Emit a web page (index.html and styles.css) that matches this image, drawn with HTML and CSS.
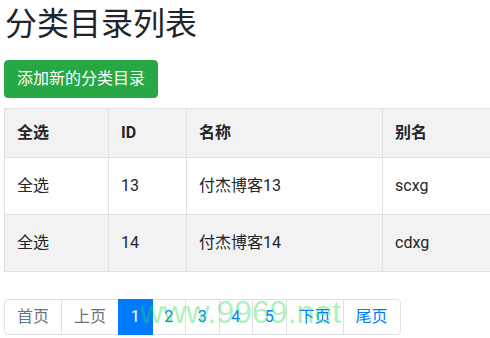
FILE: index.html
```html
<!DOCTYPE html>
<html lang="zh-CN">
<head>
    <meta charset="UTF-8">
    <meta name="viewport" content="width=device-width, initial-scale=1.0">
    <title>分类目录列表</title>
    <link rel="stylesheet" href="styles.css">
</head>
<body>
    <div class="container">
        <h1>分类目录列表</h1>

        <a class="btn btn-success" href="#">添加新的分类目录</a>

        <table class="table">
            <thead>
                <tr>
                    <th class="col-check">全选</th>
                    <th class="col-id">ID</th>
                    <th class="col-name">名称</th>
                    <th>别名</th>
                </tr>
            </thead>
            <tbody>
                <tr>
                    <td>全选</td>
                    <td>13</td>
                    <td>付杰博客13</td>
                    <td>scxg</td>
                </tr>
                <tr class="striped">
                    <td>全选</td>
                    <td>14</td>
                    <td>付杰博客14</td>
                    <td>cdxg</td>
                </tr>
            </tbody>
        </table>

        <ul class="pagination">
            <li class="page-item disabled"><a class="page-link" href="#">首页</a></li>
            <li class="page-item disabled"><a class="page-link" href="#">上页</a></li>
            <li class="page-item active"><a class="page-link num" href="#">1</a></li>
            <li class="page-item"><a class="page-link num" href="#">2</a></li>
            <li class="page-item"><a class="page-link num" href="#">3</a></li>
            <li class="page-item"><a class="page-link num" href="#">4</a></li>
            <li class="page-item"><a class="page-link num" href="#">5</a></li>
            <li class="page-item"><a class="page-link" href="#">下页</a></li>
            <li class="page-item"><a class="page-link" href="#">尾页</a></li>
        </ul>
    </div>

    <div class="watermark">www.9969.net</div>
</body>
</html>
```

FILE: styles.css
```css
body {
    margin: 0;
    font-family: Roboto, "Noto Sans CJK SC", sans-serif;
    font-size: 16px;
    line-height: 1.5;
    color: #212529;
    background-color: #fff;
    overflow: hidden;
    position: relative;
    height: 338px;
}
.container {
    padding: 0 4px;
}
h1 {
    font-size: 32px;
    font-weight: 400;
    line-height: 1.2;
    margin: 5px 0 17px;
    padding-left: 1px;
}
.btn {
    display: inline-block;
    box-sizing: border-box;
    height: 38px;
    padding: 6px 12px;
    font-size: 16px;
    line-height: 24px;
    border-radius: 4px;
    text-decoration: none;
}
.btn-success {
    color: #fff;
    background-color: #28a745;
    border: 1px solid #28a745;
}
.table {
    width: 620px;
    margin-top: 10px;
    margin-bottom: 27px;
    border-collapse: collapse;
    table-layout: fixed;
}
.table th,
.table td {
    border: 1px solid #dee2e6;
    padding: 12px;
    text-align: left;
    vertical-align: middle;
}
.table th {
    font-weight: 700;
    background-color: #f2f2f2;
    height: 23px;
}
.table td {
    height: 32px;
}
.table .col-check { width: 79px; }
.table .col-id { width: 53px; }
.table .col-name { width: 171px; }
.table .striped td {
    background-color: #f2f2f2;
}
.pagination {
    display: flex;
    list-style: none;
    margin: 0;
    padding: 0;
}
.page-link {
    display: block;
    padding: 7px 12px;
    margin-left: -1px;
    line-height: 20px;
    color: #007bff;
    background-color: #fff;
    border: 1px solid #dee2e6;
    text-decoration: none;
}
.page-link.num {
    padding: 7px 11.75px;
}
.page-item:first-child .page-link {
    margin-left: 0;
    border-radius: 4px 0 0 4px;
}
.page-item:last-child .page-link {
    border-radius: 0 4px 4px 0;
}
.page-item.disabled .page-link {
    color: #6c757d;
}
.page-item.active .page-link {
    color: #fff;
    background-color: #007bff;
    border-color: #007bff;
    position: relative;
}
.watermark {
    position: absolute;
    left: 140px;
    top: 292px;
    font-family: "Liberation Sans", Arial, sans-serif;
    font-size: 32px;
    line-height: 40px;
    color: rgba(40, 220, 80, 0.4);
    pointer-events: none;
}
```
